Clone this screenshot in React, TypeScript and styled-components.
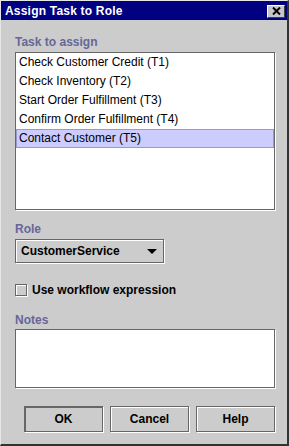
import styled, { createGlobalStyle } from "styled-components";

const GlobalStyle = createGlobalStyle`
  html, body {
    margin: 0;
    padding: 0;
    background: #cccccc;
  }
  body {
    font-family: "Liberation Sans", Arial, sans-serif;
  }
`;

const tasks = [
  "Check Customer Credit (T1)",
  "Check Inventory (T2)",
  "Start Order Fulfillment (T3)",
  "Confirm Order Fulfillment (T4)",
  "Contact Customer (T5)",
];

function App() {
  const selected = 4;

  return (
    <>
      <GlobalStyle />
      <Window>
        <TitleBar>
          <Title>Assign Task to Role</Title>
          <CloseButton type="button">
            <svg width="9" height="8" viewBox="0 0 9 8">
              <path d="M1 0.5 L8 7.5 M8 0.5 L1 7.5" stroke="#000" strokeWidth="2" />
            </svg>
          </CloseButton>
        </TitleBar>
        <Body>
          <SectionLabel>Task to assign</SectionLabel>
          <TaskList>
            {tasks.map((task, i) => (
              <TaskItem key={task} $selected={i === selected}>
                {task}
              </TaskItem>
            ))}
          </TaskList>

          <SectionLabel $top={12}>Role</SectionLabel>
          <Combo>
            <span>CustomerService</span>
            <Arrow />
          </Combo>

          <CheckRow>
            <CheckBox />
            <span>Use workflow expression</span>
          </CheckRow>

          <SectionLabel $top={17}>Notes</SectionLabel>
          <NotesBox />

          <ButtonRow>
            <DialogButton type="button" $default>
              OK
            </DialogButton>
            <DialogButton type="button">Cancel</DialogButton>
            <DialogButton type="button">Help</DialogButton>
          </ButtonRow>
        </Body>
      </Window>
    </>
  );
}

const Window = styled.div`
  width: 289px;
  height: 446px;
  box-sizing: border-box;
  background: #cccccc;
  border-top: 1px solid #e6e6e6;
  border-left: 1px solid #e6e6e6;
  border-right: 2px solid #333;
  border-bottom: 2px solid #333;
  display: flex;
  flex-direction: column;
`;

const TitleBar = styled.div`
  height: 19px;
  background: #000080;
  display: flex;
  align-items: center;
  justify-content: space-between;
  padding: 0 2px 0 4px;
`;

const Title = styled.span`
  color: #fff;
  font-weight: bold;
  font-size: 12px;
  letter-spacing: 0.2px;
`;

const CloseButton = styled.button`
  width: 18px;
  height: 13px;
  padding: 0;
  margin-top: 1px;
  background: #c6c6c6;
  border: 1px solid;
  border-color: #fff #404040 #404040 #fff;
  display: flex;
  align-items: center;
  justify-content: center;
`;

const Body = styled.div`
  display: flex;
  flex-direction: column;
  padding: 15px 12px 0 14px;
`;

const SectionLabel = styled.div<{ $top?: number }>`
  margin-top: ${(p) => p.$top ?? 0}px;
  height: 15px;
  line-height: 15px;
  font-size: 12px;
  font-weight: bold;
  color: #666699;
`;

const etched = `
  border: 1px solid #666666;
  box-shadow: 1px 1px 0 #ffffff, inset 1px 1px 0 #ffffff;
`;

const TaskList = styled.div`
  margin-top: 2px;
  height: 158px;
  box-sizing: border-box;
  background: #fff;
  ${etched}
  display: flex;
  flex-direction: column;
`;

const TaskItem = styled.div<{ $selected?: boolean }>`
  height: 19px;
  box-sizing: border-box;
  line-height: 17px;
  padding-left: 2px;
  font-size: 12px;
  color: #000;
  border: 1px solid ${(p) => (p.$selected ? "#9999cc" : "transparent")};
  background: ${(p) => (p.$selected ? "#ccccff" : "transparent")};
`;

const Combo = styled.div`
  margin-top: 2px;
  width: 149px;
  height: 24px;
  box-sizing: border-box;
  ${etched}
  display: flex;
  align-items: center;
  justify-content: space-between;
  padding: 0 6px 0 5px;
  font-size: 12px;
  font-weight: bold;
  color: #000;
`;

const Arrow = styled.span`
  width: 0;
  height: 0;
  border-left: 5px solid transparent;
  border-right: 5px solid transparent;
  border-top: 5px solid #000;
`;

const CheckRow = styled.div`
  margin-top: 20px;
  display: flex;
  align-items: center;
  gap: 5px;
  height: 13px;
  font-size: 12px;
  font-weight: bold;
  color: #000;
`;

const CheckBox = styled.span`
  width: 12px;
  height: 12px;
  box-sizing: border-box;
  ${etched}
  background: #cccccc;
`;

const NotesBox = styled.div`
  margin-top: 1px;
  height: 59px;
  box-sizing: border-box;
  background: #fff;
  ${etched}
`;

const ButtonRow = styled.div`
  margin-top: 18px;
  display: flex;
  justify-content: flex-end;
  gap: 7px;
`;

const DialogButton = styled.button<{ $default?: boolean }>`
  width: 79px;
  height: 26px;
  box-sizing: border-box;
  background: #cccccc;
  font-family: "Liberation Sans", Arial, sans-serif;
  font-size: 12px;
  font-weight: bold;
  color: #000;
  padding: 0;
  border: 1px solid #666666;
  box-shadow: ${(p) =>
    p.$default
      ? "1px 1px 0 #ffffff, inset 1px 1px 0 #666666"
      : "1px 1px 0 #ffffff, inset 1px 1px 0 #ffffff"};
`;

export default App;
